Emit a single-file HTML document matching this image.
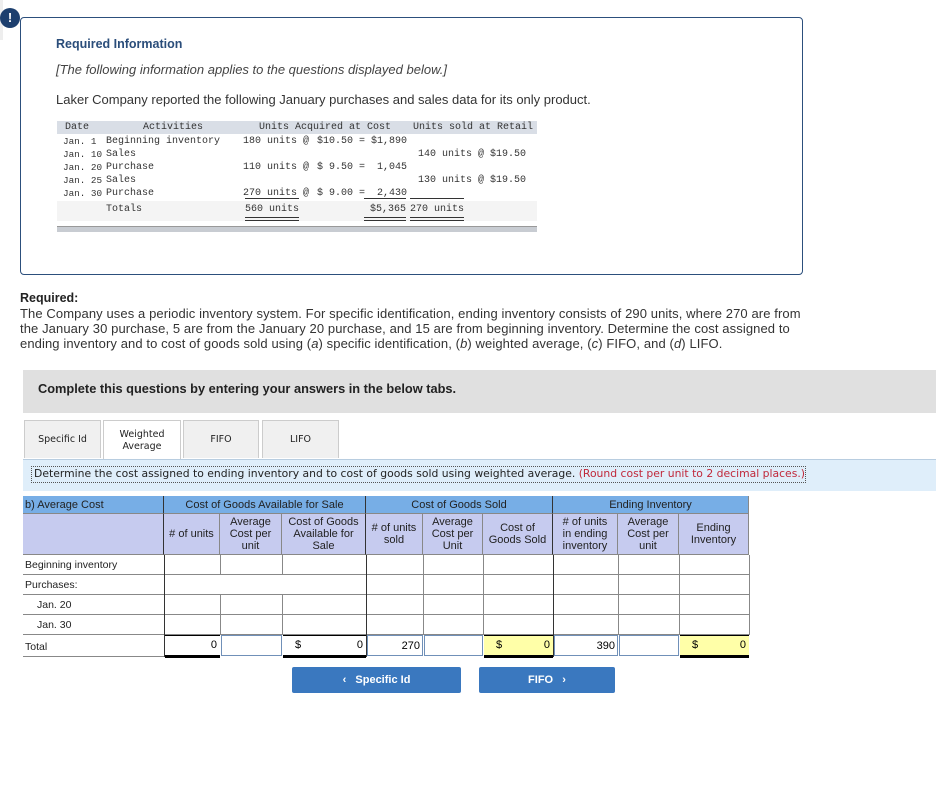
<!DOCTYPE html>
<html><head><meta charset="utf-8"><style>
body{margin:0;width:940px;height:786px;background:#fff;position:relative;font-family:"Liberation Sans",sans-serif;overflow:hidden}
.a{position:absolute}
.box{left:20px;top:17px;width:781px;height:256px;border:1px solid #2c4f7c;border-radius:4px}
.ic{left:0;top:8px;width:20px;height:20px;border-radius:50%;background:#1d3f6e;color:#fff;font-weight:bold;font-size:13px;text-align:center;line-height:20px}
.m{position:absolute;font-family:"Liberation Mono",monospace;font-size:10px;color:#333;white-space:pre;line-height:12px}
.d{font-size:9.3px}
.t{font-size:11px;color:#222}
.c{position:absolute;box-sizing:border-box;border-right:1px solid #888;border-bottom:1px solid #888;font-size:11px;color:#222;display:flex;align-items:center;justify-content:center;text-align:center;line-height:12px}
.h1{background:#77aee6}
.h2{background:#c6cbef}
.tab{top:420px;height:38px;background:#f0f0f0;border:1px solid #ccc;border-bottom:none;box-sizing:border-box;font-family:"DejaVu Sans",sans-serif;font-size:9.5px;color:#222;display:flex;align-items:center;justify-content:center;text-align:center;line-height:12px}
.btn{top:667px;height:26px;background:#3a78bf;color:#fff;font-weight:bold;font-size:11px;display:flex;align-items:center;justify-content:center;border-radius:2px}
.ul{position:absolute;border-top:1px solid #333}
.dl{position:absolute;height:2px;border-top:1px solid #333;border-bottom:1px solid #333}
</style></head><body>
<div class="a" style="left:0;top:0;width:3px;height:40px;background:#eee"></div>
<div class="a box"></div>
<div class="a ic">!</div>
<div class="a" style="left:56px;top:37px;font-size:12.5px;font-weight:bold;color:#2a4d7a">Required Information</div>
<div class="a" style="left:56px;top:62px;font-size:13px;font-style:italic;color:#444">[The following information applies to the questions displayed below.]</div>
<div class="a" style="left:56px;top:92px;font-size:13px;color:#333">Laker Company reported the following January purchases and sales data for its only product.</div>
<div class="a" style="left:57px;top:121px;width:480px;height:13px;background:#d9dee6"></div>
<div class="a" style="left:57px;top:201px;width:480px;height:20px;background:#f4f4f4"></div>
<div class="a" style="left:57px;top:226px;width:480px;height:5px;background:#c8ccd2;border-top:1px solid #999"></div>

<div class="m" style="left:65px;top:122px">Date</div>
<div class="m" style="left:143px;top:122px">Activities</div>
<div class="m" style="left:259px;top:122px">Units Acquired at Cost</div>
<div class="m" style="left:413px;top:122px">Units sold at Retail</div>

<div class="m d" style="left:63px;top:136px">Jan. 1</div><div class="m" style="left:106px;top:136px">Beginning inventory</div>
<div class="m" style="left:243px;top:136px">180 units @</div><div class="m" style="left:317px;top:136px">$10.50 =</div><div class="m" style="left:371px;top:136px">$1,890</div>
<div class="m d" style="left:63px;top:149px">Jan. 10</div><div class="m" style="left:106px;top:149px">Sales</div>
<div class="m" style="left:418px;top:149px">140 units @</div><div class="m" style="left:490px;top:149px">$19.50</div>
<div class="m d" style="left:63px;top:162px">Jan. 20</div><div class="m" style="left:106px;top:162px">Purchase</div>
<div class="m" style="left:243px;top:162px">110 units @</div><div class="m" style="left:317px;top:162px">$ 9.50 =</div><div class="m" style="left:377px;top:162px">1,045</div>
<div class="m d" style="left:63px;top:175px">Jan. 25</div><div class="m" style="left:106px;top:175px">Sales</div>
<div class="m" style="left:418px;top:175px">130 units @</div><div class="m" style="left:490px;top:175px">$19.50</div>
<div class="m d" style="left:63px;top:188px">Jan. 30</div><div class="m" style="left:106px;top:188px">Purchase</div>
<div class="m" style="left:243px;top:188px">270 units @</div><div class="m" style="left:317px;top:188px">$ 9.00 =</div><div class="m" style="left:377px;top:188px">2,430</div>
<div class="m" style="left:106px;top:204px">Totals</div>
<div class="m" style="left:245px;top:204px">560 units</div>
<div class="m" style="left:370px;top:204px">$5,365</div>
<div class="m" style="left:410px;top:204px">270 units</div>
<div class="ul" style="left:245px;top:198px;width:54px"></div>
<div class="ul" style="left:364px;top:198px;width:42px"></div>
<div class="ul" style="left:410px;top:198px;width:54px"></div>
<div class="dl" style="left:245px;top:217px;width:54px"></div>
<div class="dl" style="left:364px;top:217px;width:42px"></div>
<div class="dl" style="left:410px;top:217px;width:54px"></div>

<div class="a" style="left:20px;top:291px;font-size:12.5px;font-weight:bold;color:#222">Required:</div>
<div class="a" style="left:20px;top:306px;line-height:15px;color:#333;font-size:13px;letter-spacing:0.1px;white-space:nowrap">The Company uses a periodic inventory system. For specific identification, ending inventory consists of 290 units, where 270 are from<br>the January 30 purchase, 5 are from the January 20 purchase, and 15 are from beginning inventory. Determine the cost assigned to<br>ending inventory and to cost of goods sold using (<i>a</i>) specific identification, (<i>b</i>) weighted average, (<i>c</i>) FIFO, and (<i>d</i>) LIFO.</div>

<div class="a" style="left:23px;top:370px;width:913px;height:43px;background:#e0e0e0"></div>
<div class="a" style="left:38px;top:381px;font-size:12.8px;font-weight:bold;color:#222">Complete this questions by entering your answers in the below tabs.</div>

<div class="a tab" style="left:24px;width:77px">Specific Id</div>
<div class="a tab" style="left:103px;width:78px;background:#fff;height:40px">Weighted<br>Average</div>
<div class="a tab" style="left:183px;width:76px">FIFO</div>
<div class="a tab" style="left:262px;width:77px">LIFO</div>
<div class="a" style="left:23px;top:459px;width:913px;height:31px;background:#dfeefa;border-top:1px solid #b8cde0"></div>
<div class="a" style="left:31px;top:466px;width:773px;height:15px;border:1px dotted #555"></div>
<div class="a" style="left:34px;top:467px;font-family:'DejaVu Sans',sans-serif;font-size:10.8px;color:#222;white-space:nowrap">Determine the cost assigned to ending inventory and to cost of goods sold using weighted average. <span style="color:#c0283a">(Round cost per unit to 2 decimal places.)</span></div>

<div class="c h1" style="left:23px;top:496px;width:141px;height:18px;justify-content:flex-start;padding-left:2px;border-right:1px solid #333">b) Average Cost</div>
<div class="c h1" style="left:164px;top:496px;width:202px;height:18px;border-right:1px solid #333">Cost of Goods Available for Sale</div>
<div class="c h1" style="left:366px;top:496px;width:187px;height:18px;border-right:1px solid #333">Cost of Goods Sold</div>
<div class="c h1" style="left:553px;top:496px;width:196px;height:18px">Ending Inventory</div>
<div class="c h2" style="left:23px;top:514px;width:141px;height:41px;border-right:1px solid #333"></div>
<div class="c h2" style="left:164px;top:514px;width:56px;height:41px"># of units</div>
<div class="c h2" style="left:220px;top:514px;width:62px;height:41px">Average<br>Cost per<br>unit</div>
<div class="c h2" style="left:282px;top:514px;width:84px;height:41px;border-right:1px solid #333">Cost of Goods<br>Available for<br>Sale</div>
<div class="c h2" style="left:366px;top:514px;width:57px;height:41px"># of units<br>sold</div>
<div class="c h2" style="left:423px;top:514px;width:60px;height:41px">Average<br>Cost per<br>Unit</div>
<div class="c h2" style="left:483px;top:514px;width:70px;height:41px;border-right:1px solid #333">Cost of<br>Goods Sold</div>
<div class="c h2" style="left:553px;top:514px;width:65px;height:41px"># of units<br>in ending<br>inventory</div>
<div class="c h2" style="left:618px;top:514px;width:61px;height:41px">Average<br>Cost per<br>unit</div>
<div class="c h2" style="left:679px;top:514px;width:70px;height:41px">Ending<br>Inventory</div>

<div class="a" style="left:23px;top:574px;width:726px;border-top:1px solid #888"></div>
<div class="a" style="left:23px;top:594px;width:726px;border-top:1px solid #888"></div>
<div class="a" style="left:23px;top:614px;width:726px;border-top:1px solid #888"></div>
<div class="a" style="left:23px;top:634px;width:726px;border-top:1px solid #888"></div>
<div class="a" style="left:23px;top:656px;width:141px;border-top:1px solid #888"></div>
<div class="a" style="left:164px;top:555px;height:102px;border-left:1px solid #333"></div>
<div class="a" style="left:366px;top:555px;height:102px;border-left:1px solid #333"></div>
<div class="a" style="left:553px;top:555px;height:102px;border-left:1px solid #333"></div>
<div class="a" style="left:220px;top:555px;height:20px;border-left:1px solid #888"></div>
<div class="a" style="left:220px;top:595px;height:40px;border-left:1px solid #888"></div>
<div class="a" style="left:282px;top:555px;height:20px;border-left:1px solid #888"></div>
<div class="a" style="left:282px;top:595px;height:40px;border-left:1px solid #888"></div>
<div class="a" style="left:423px;top:555px;height:80px;border-left:1px solid #888"></div>
<div class="a" style="left:483px;top:555px;height:80px;border-left:1px solid #888"></div>
<div class="a" style="left:618px;top:555px;height:80px;border-left:1px solid #888"></div>
<div class="a" style="left:679px;top:555px;height:80px;border-left:1px solid #888"></div>
<div class="a" style="left:749px;top:555px;height:80px;border-left:1px solid #888"></div>

<div class="a t" style="left:25px;top:559px;font-size:10.5px">Beginning inventory</div>
<div class="a t" style="left:25px;top:579px;font-size:10.5px">Purchases:</div>
<div class="a t" style="left:37px;top:599px;font-size:10.5px">Jan. 20</div>
<div class="a t" style="left:37px;top:619px;font-size:10.5px">Jan. 30</div>
<div class="a t" style="left:25px;top:641px;font-size:10.5px">Total</div>

<div class="a" style="left:165px;top:635px;width:55px;height:19px;border-top:1px solid #000;border-bottom:3px solid #000;font-size:11px;text-align:right;line-height:19px"><span style="padding-right:3px">0</span></div>
<div class="a" style="left:221px;top:635px;width:61px;height:21px;border:1px solid #7090b8;box-sizing:border-box"></div>
<div class="a" style="left:283px;top:635px;width:83px;height:19px;border-top:1px solid #000;border-bottom:3px solid #000;font-size:11px;line-height:19px"><span style="margin-left:12px">$</span><span style="float:right;margin-right:3px">0</span></div>
<div class="a" style="left:367px;top:635px;width:56px;height:21px;border:1px solid #7090b8;box-sizing:border-box;font-size:11px;text-align:right;line-height:20px;padding-right:2px">270</div>
<div class="a" style="left:424px;top:635px;width:59px;height:21px;border:1px solid #7090b8;box-sizing:border-box"></div>
<div class="a" style="left:484px;top:635px;width:69px;height:19px;background:#ffffa8;border-top:1px solid #000;border-bottom:3px solid #000;font-size:11px;line-height:19px"><span style="margin-left:12px">$</span><span style="float:right;margin-right:3px">0</span></div>
<div class="a" style="left:554px;top:635px;width:64px;height:21px;border:1px solid #7090b8;box-sizing:border-box;font-size:11px;text-align:right;line-height:20px;padding-right:2px">390</div>
<div class="a" style="left:619px;top:635px;width:60px;height:21px;border:1px solid #7090b8;box-sizing:border-box"></div>
<div class="a" style="left:680px;top:635px;width:69px;height:19px;background:#ffffa8;border-top:1px solid #000;border-bottom:3px solid #000;font-size:11px;line-height:19px"><span style="margin-left:12px">$</span><span style="float:right;margin-right:3px">0</span></div>

<div class="a btn" style="left:292px;width:169px">&lsaquo;&nbsp;&nbsp;&nbsp;Specific Id</div>
<div class="a btn" style="left:479px;width:136px">FIFO&nbsp;&nbsp;&nbsp;&rsaquo;</div>
</body></html>
